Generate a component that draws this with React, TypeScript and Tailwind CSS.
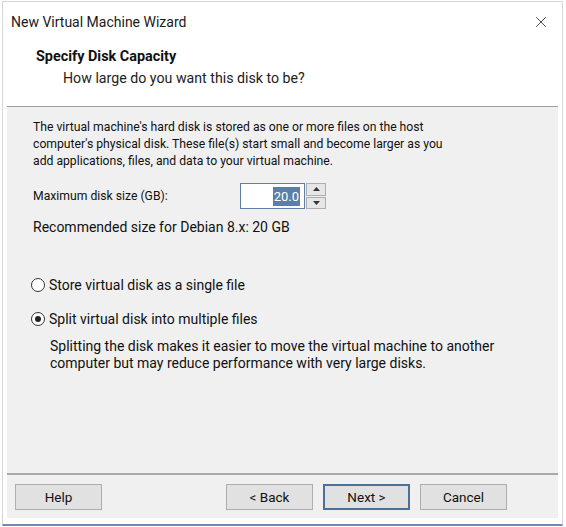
import { X } from "lucide-react";

const font = { fontFamily: "Roboto, 'Noto Sans', sans-serif" };

function Button({ label, primary }: { label: string; primary?: boolean }) {
  return (
    <div
      className={`w-[87px] h-[26px] flex items-center justify-center bg-[#e1e1e1] text-[13.5px] text-[#111] ${
        primary ? "border-2 border-[#4a7199]" : "border border-[#adadad]"
      }`}
    >
      {label}
    </div>
  );
}

export default function App() {
  return (
    <div className="w-[566px] h-[527px] bg-white pl-[2px] pt-[1px]" style={font}>
      <div className="w-[561px] h-[525px] border border-[#d6d6d6] border-b-2 border-b-[#6f8db3] bg-white flex flex-col">
        <div className="h-[40px] shrink-0 flex items-center justify-between pl-[8px] pr-[12px]">
          <span className="text-[14px] text-[#1a1a1a]">New Virtual Machine Wizard</span>
          <X className="w-[18px] h-[18px] text-[#222]" strokeWidth={1.1} />
        </div>
        <div className="h-[64px] shrink-0 pl-[33px] pt-[6px]">
          <div className="text-[14.4px] font-bold text-[#111] leading-[18px]">Specify Disk Capacity</div>
          <div className="pl-[27px] pt-[3px] text-[14.2px] text-[#222] leading-[18px]">
            How large do you want this disk to be?
          </div>
        </div>
        <div className="mx-[4px] h-[412px] border-t border-[#a0a0a0] bg-[#f0f0f0] flex flex-col text-[#111]">
          <div className="px-[26px] pt-[12px] text-[12.2px] leading-[17px]">
            <p>The virtual machine's hard disk is stored as one or more files on the host</p>
            <p>computer's physical disk. These file(s) start small and become larger as you</p>
            <p>add applications, files, and data to your virtual machine.</p>
          </div>
          <div className="flex items-center px-[26px] mt-[13px]">
            <span className="w-[207px] text-[12.2px]">Maximum disk size (GB):</span>
            <div className="w-[65px] h-[26px] border border-[#5d7fa6] bg-white flex items-center justify-end pr-[4px] text-[13px]">
              <span className="bg-[#5b7fa6] text-white px-[1px] leading-[19px]">20.0</span>
            </div>
            <div className="ml-[1px] w-[20px] h-[26px] flex flex-col gap-[1px]">
              <div className="flex-1 border border-[#adadad] bg-[#e6e6e6] flex items-center justify-center">
                <svg width="7" height="4" viewBox="0 0 7 4"><path d="M3.5 0L7 4H0z" fill="#333" /></svg>
              </div>
              <div className="flex-1 border border-[#adadad] bg-[#e6e6e6] flex items-center justify-center">
                <svg width="7" height="4" viewBox="0 0 7 4"><path d="M0 0h7L3.5 4z" fill="#333" /></svg>
              </div>
            </div>
          </div>
          <p className="px-[26px] mt-[9px] text-[14px] leading-[18px]">Recommended size for Debian 8.x: 20 GB</p>
          <div className="px-[24px] mt-[40px] flex items-center gap-[4px] text-[14px] leading-[18px]">
            <div className="w-[14px] h-[14px] rounded-full border border-[#333] bg-white" />
            <span>Store virtual disk as a single file</span>
          </div>
          <div className="px-[24px] mt-[16px] flex items-center gap-[4px] text-[14px] leading-[18px]">
            <div className="w-[14px] h-[14px] rounded-full border border-[#333] bg-white flex items-center justify-center">
              <div className="w-[6px] h-[6px] rounded-full bg-[#222]" />
            </div>
            <span>Split virtual disk into multiple files</span>
          </div>
          <div className="pl-[43px] mt-[10px] text-[14px] leading-[17px]">
            <p>Splitting the disk makes it easier to move the virtual machine to another</p>
            <p>computer but may reduce performance with very large disks.</p>
          </div>
          <div className="flex-1" />
          <div className="border-t-2 border-[#a9a9a9] h-[45px] flex items-start pt-[9px] pl-[8px]">
            <Button label="Help" />
            <div className="flex-1" />
            <div className="flex gap-[10px] pr-[51px]">
              <Button label="< Back" />
              <Button label="Next >" primary />
              <Button label="Cancel" />
            </div>
          </div>
        </div>
      </div>
    </div>
  );
}
